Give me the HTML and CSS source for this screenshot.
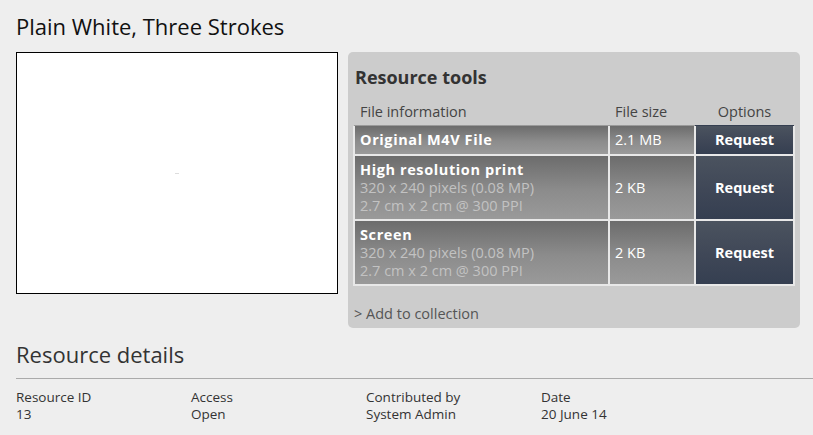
FILE: index.html
```html
<!DOCTYPE html>
<html lang="en">
<head>
  <meta charset="UTF-8" />
  <meta name="viewport" content="width=device-width, initial-scale=1.0"/>
  <title>Plain White, Three Strokes</title>
  <link rel="stylesheet" href="styles.css">
</head>
<body>
  <h1 class="title">Plain White, Three Strokes</h1>

  <div class="top-row">
    <div class="preview">
      <span class="preview-dot"></span>
    </div>

    <div class="tools">
      <h2>Resource tools</h2>
      <table class="downloads">
        <tr class="head">
          <th class="info">File information</th>
          <th class="size">File size</th>
          <th class="opt">Options</th>
        </tr>
        <tr>
          <td class="info"><b>Original M4V File</b></td>
          <td class="size">2.1 MB</td>
          <td class="opt"><a href="#">Request</a></td>
        </tr>
        <tr class="tall">
          <td class="info">
            <b>High resolution print</b>
            <span class="sub">320 x 240 pixels (0.08 MP)</span>
            <span class="sub">2.7 cm x 2 cm @ 300 PPI</span>
          </td>
          <td class="size">2 KB</td>
          <td class="opt"><a href="#">Request</a></td>
        </tr>
        <tr class="tall">
          <td class="info">
            <b>Screen</b>
            <span class="sub">320 x 240 pixels (0.08 MP)</span>
            <span class="sub">2.7 cm x 2 cm @ 300 PPI</span>
          </td>
          <td class="size">2 KB</td>
          <td class="opt"><a href="#">Request</a></td>
        </tr>
      </table>
      <a class="add-link" href="#">&gt; Add to collection</a>
    </div>
  </div>

  <h2 class="details-title">Resource details</h2>
  <div class="details">
    <div class="field"><span class="label">Resource ID</span><span class="value">13</span></div>
    <div class="field"><span class="label">Access</span><span class="value">Open</span></div>
    <div class="field"><span class="label">Contributed by</span><span class="value">System Admin</span></div>
    <div class="field"><span class="label">Date</span><span class="value">20 June 14</span></div>
  </div>
</body>
</html>
```

FILE: styles.css
```css
body {
  margin: 0;
  padding: 0 0 0 16px;
  background: #eeeeee;
  font-family: "Open Sans", "DejaVu Sans", sans-serif;
  color: #333;
  overflow: hidden;
}
.title {
  font-size: 22px;
  font-weight: normal;
  color: #111;
  margin: 0;
  padding-top: 12px;
  height: 40px;
  line-height: 28px;
}
.top-row {
  display: flex;
  align-items: flex-start;
}
.preview {
  width: 320px;
  height: 240px;
  background: #fff;
  border: 1px solid #000;
  display: flex;
  align-items: center;
  justify-content: center;
}
.preview-dot {
  width: 4px;
  height: 1px;
  background: #ddd;
}
.tools {
  margin-left: 10px;
  width: 440px;
  height: 264px;
  padding: 6px;
  background: #cccccc;
  border-radius: 5px;
}
.tools h2 {
  font-size: 18px;
  font-weight: bold;
  color: #333;
  margin: 0;
  padding: 6px 0 0 1px;
  line-height: 26px;
}
.downloads {
  border-collapse: collapse;
  width: 442px;
  margin-left: -1px;
  margin-top: 9px;
  font-size: 14.5px;
}
.downloads th {
  font-weight: normal;
  color: #444;
  text-align: left;
  padding: 0 5px;
  height: 25px;
  border: 2px solid transparent;
  border-top: 0;
}
.downloads th.opt {
  text-align: center;
}
.downloads td {
  border: 2px solid #e8e8e8;
  background: linear-gradient(to bottom, #6c6c6c 0%, #8c8c8c 55%, #9a9a9a 100%);
  color: #fff;
  padding: 0 5px;
  height: 28px;
  line-height: 18px;
}
.downloads tr.tall td {
  height: 63px;
}
.downloads .info {
  width: 243px;
}
.downloads .size {
  width: 74px;
}
.downloads td.info b {
  letter-spacing: 0.6px;
}
.downloads td.opt {
  background: linear-gradient(to bottom, #4b535f 0%, #3f4757 55%, #353f51 100%);
  text-align: center;
  padding: 0;
}
.downloads td.opt a {
  color: #fff;
  font-weight: bold;
  text-decoration: none;
}
.downloads .sub {
  display: block;
  color: #c2c2c2;
}
.add-link {
  display: block;
  margin-top: 18px;
  color: #555;
  font-size: 14.5px;
  text-decoration: none;
}
.details-title {
  font-size: 22px;
  font-weight: normal;
  color: #333;
  margin: 0;
  padding-top: 12px;
  line-height: 28px;
  height: 38px;
  border-bottom: 1px solid #aaa;
}
.details {
  display: flex;
  padding-top: 10px;
  font-size: 13.5px;
  line-height: 17px;
}
.field {
  width: 175px;
  display: flex;
  flex-direction: column;
}
```
